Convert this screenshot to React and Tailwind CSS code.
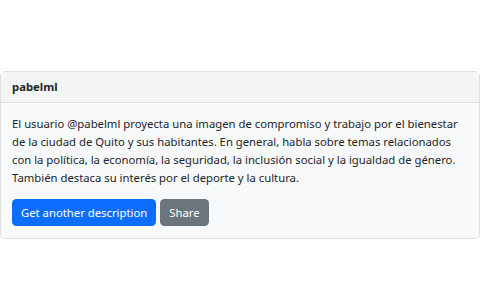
export default function App() {
    return (
        <div className="min-h-screen bg-white pt-[71px] font-['Noto_Sans',sans-serif] text-[11.3px] leading-[18px] text-[#212529]">
            <div className="rounded-[5px] border border-[#dfdfdf] bg-[#f8f9fa]">
                <div className="border-b border-[#dfdfdf] bg-[#f4f5f6] px-[11px] py-[6px] font-bold">pabelml</div>
                <div className="px-[11px] py-3">
                    <p className="mb-3">
                        El usuario @pabelml proyecta una imagen de compromiso y trabajo por el bienestar de la ciudad de Quito y sus
                        habitantes. En general, habla sobre temas relacionados con la política, la economía, la seguridad, la inclusión
                        social y la igualdad de género. También destaca su interés por el deporte y la cultura.
                    </p>
                    <div className="flex gap-[4px]">
                        <button type="button" className="rounded-[4.5px] bg-[#0d6efd] px-[9px] py-[4.5px] text-white">
                            Get another description
                        </button>
                        <button type="button" className="rounded-[4.5px] bg-[#6c757d] px-[9px] py-[4.5px] text-white">
                            Share
                        </button>
                    </div>
                </div>
            </div>
        </div>
    );
}
